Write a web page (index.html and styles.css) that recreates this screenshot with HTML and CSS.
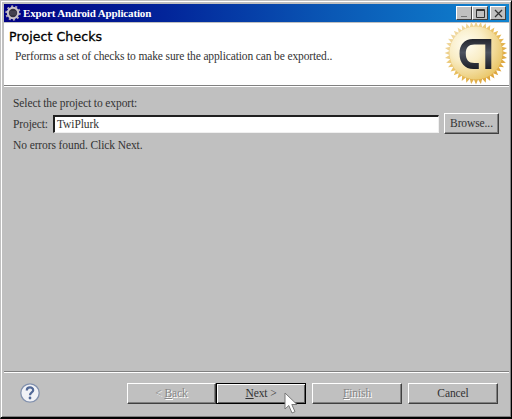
FILE: index.html
```html
<!DOCTYPE html>
<html lang="en">
<head>
	<meta charset="UTF-8">
	<title>Export Android Application</title>
	<link rel="stylesheet" href="styles.css">
</head>
<body>
	<div class="window">
		<div class="titlebar">
			<svg class="app-icon" width="16" height="16" viewBox="0 0 16 16">
				<circle cx="8" cy="8" r="6.7" fill="none" stroke="#aaa4b4" stroke-width="2" stroke-dasharray="2.1 2.1"/>
				<circle cx="8" cy="8" r="5.2" fill="#35323f" stroke="#c9c2cb" stroke-width="2"/>
				<path d="M4.500 7h7M4.500 9h7" stroke="#555160"/>
			</svg>
			<h1>Export Android Application</h1>
			<div class="controls">
				<span class="control"><svg width="13" height="11"><path d="M3 8.5h6" stroke="#777"/></svg></span>
				<span class="control"><svg width="13" height="11"><path d="M2.5 1.5h8v8h-8zM2 2.5h9" fill="none" stroke="#333"/></svg></span>
				<span class="control close"><svg width="13" height="11"><path d="M3 2l7 7M10 2l-7 7" stroke="#333" stroke-width="1.3"/></svg></span>
			</div>
		</div>

		<div class="header">
			<div>
				<h2>Project Checks</h2>
				<p>Performs a set of checks to make sure the application can be exported..</p>
			</div>
			<svg class="seal" width="62" height="62" viewBox="0 0 62 62">
				<defs>
					<linearGradient id="gold" x1="0.1" y1="0.1" x2="0.9" y2="0.9">
						<stop offset="0" stop-color="#f1deb0"/>
						<stop offset="0.5" stop-color="#e8bf60"/>
						<stop offset="1" stop-color="#dba035"/>
					</linearGradient>
					<radialGradient id="shine" cx="0.32" cy="0.34" r="0.75">
						<stop offset="0" stop-color="#fffdf2"/>
						<stop offset="0.45" stop-color="#f9edc6"/>
						<stop offset="1" stop-color="#e9c565"/>
					</radialGradient>
					<linearGradient id="ink" x1="0" y1="0" x2="0" y2="1">
						<stop offset="0" stop-color="#23252e"/>
						<stop offset="0.45" stop-color="#4c525f"/>
						<stop offset="1" stop-color="#1d1f27"/>
					</linearGradient>
				</defs>
				<polygon id="teeth" fill="url(#gold)"/>
				<circle cx="31" cy="31" r="26.5" fill="url(#shine)"/>
				<path d="M46.300 17v30h-6v-24.500h-11c-5.500 0-8.500 3-8.500 9c0 6.500 3 9.500 8.500 9.500h4.500v6h-5.500c-8.500 0-13.800-6-13.800-15.500c0-9 5-14.500 13.300-14.500z" fill="url(#ink)"/>
			</svg>
		</div>

		<div class="content">
			<p>Select the project to export:</p>
			<div class="field">
				<label>Project:</label>
				<div class="input">TwiPlurk</div>
				<div class="button browse">Browse...</div>
			</div>
			<p class="message">No errors found. Click Next.</p>
		</div>

		<div class="footer">
			<svg class="help" width="20" height="20" viewBox="0 0 20 20">
				<circle cx="10" cy="10" r="9.200" fill="#f1f2f6" stroke="#8190ad" stroke-width="1.300"/>
				<path d="M6.800 7.500c0-4 6.400-4 6.400-.3c0 2.300-3.200 2.200-3.200 5" fill="none" stroke="#526997" stroke-width="2.200"/>
				<circle cx="10" cy="15" r="1.400" fill="#526997"/>
			</svg>
			<div class="button disabled back">&lt; <u>B</u>ack</div>
			<div class="button default"><u>N</u>ext &gt;</div>
			<div class="button disabled finish"><u>F</u>inish</div>
			<div class="button cancel">Cancel</div>
		</div>
	</div>

	<svg class="cursor" width="15" height="23" viewBox="0 0 15 23">
		<path d="M1 1v16l3.800-3.500l3.200 7.500l3-1.300l-3.200-7.200h5.200z" fill="#fff" stroke="#777" stroke-width="1"/>
	</svg>

	<script>
		// edge of the seal
		var count = 40;
		var points = [];
		for (var i = 0; i < count * 2; i++) {
			var r = i % 2 ? 26.5 : 31.4;
			var a = i * Math.PI / count;
			points.push((31 + r * Math.cos(a)).toFixed(2) + "," + (31 + r * Math.sin(a)).toFixed(2));
		}
		document.getElementById("teeth").setAttribute("points", points.join(" "));
	</script>
</body>
</html>
```
FILE: styles.css
```css
* {
	box-sizing: border-box;
}

body {
	margin: 0;
	background: #c0c0c0;
	font: 11.5px/16px "Liberation Serif", serif;
	letter-spacing: -0.1px;
	color: #333;
	overflow: hidden;
}

h1, h2, p {
	margin: 0;
	white-space: nowrap;
}

.window {
	display: flex;
	flex-direction: column;
	width: 512px;
	height: 419px;
	padding: 3px 2px 1px 3px;
	border: 1px solid #c0c0c0;
	border-right: 1px solid #000;
	border-bottom: 2px solid #000;
	box-shadow: inset 1px 1px #fff, inset -1px -1px #808080;
}

.titlebar {
	display: flex;
	align-items: center;
	height: 18px;
	padding: 0 3px 0 1px;
	background: linear-gradient(to right, #000084 0%, #02259a 32%, #0a58b5 65%, #1084d0 100%);
}

.titlebar h1 {
	margin-left: 2px;
	font-size: 11px;
	line-height: 18px;
	letter-spacing: -0.14px;
	color: #fff;
}

.controls {
	display: flex;
	margin-left: auto;
}

.control {
	width: 16px;
	height: 14px;
	padding: 1px;
	background: #c0c0c0;
	border: 1px solid #fff;
	border-right-color: #404040;
	border-bottom-color: #404040;
	line-height: 0;
}

.close {
	margin-left: 2px;
}

.header {
	display: flex;
	justify-content: space-between;
	height: 64px;
	padding: 0 2px 0 5px;
	background: #fff;
	border-top: 1px solid #c0c0c0;
	border-bottom: 1px solid #808080;
	box-shadow: 0 1px #fff;
}

.header h2 {
	margin-top: 6px;
	font: 12.5px/16px "DejaVu Sans", sans-serif;
	letter-spacing: 0.1px;
	color: #000;
	-webkit-text-stroke: 0.3px #000;
}

.header p {
	margin: 3px 0 0 6px;
	letter-spacing: -0.13px;
}

.seal {
	margin-top: -1px;
	overflow: visible;
}

.content {
	flex: 1;
	padding: 9px 10px 0 9px;
}

.field {
	display: flex;
	align-items: center;
	margin-top: 2px;
}

.field label {
	width: 40px;
}

.input {
	flex: 1;
	height: 18px;
	padding-left: 2px;
	background: #fff;
	border: 2px solid #202020;
	border-right: 1px solid #f0f0f0;
	border-bottom: 1px solid #f0f0f0;
	line-height: 15px;
}

.button {
	width: 90px;
	height: 21px;
	border: 1px solid #fff;
	border-right-color: #404040;
	border-bottom-color: #404040;
	box-shadow: inset -1px -1px #808080;
	line-height: 18px;
	text-align: center;
}

.browse {
	width: 55px;
	margin-left: 5px;
}

.message {
	margin-top: 3px;
}

.footer {
	display: flex;
	height: 45px;
	padding: 11px 10px 0 16px;
	border-top: 1px solid #808080;
	box-shadow: inset 0 1px #fff;
}

.back {
	width: 89px;
	margin-left: 87px;
}

.default {
	border: 1px solid #000;
	box-shadow: inset 1px 1px #fff, inset -1px -1px #606060;
}

.finish {
	margin-left: 6px;
}

.cancel {
	margin-left: 6px;
}

.disabled {
	color: #868686;
	text-shadow: 1px 1px #fff;
}

.cursor {
	position: absolute;
	left: 284px;
	top: 392px;
}
```
